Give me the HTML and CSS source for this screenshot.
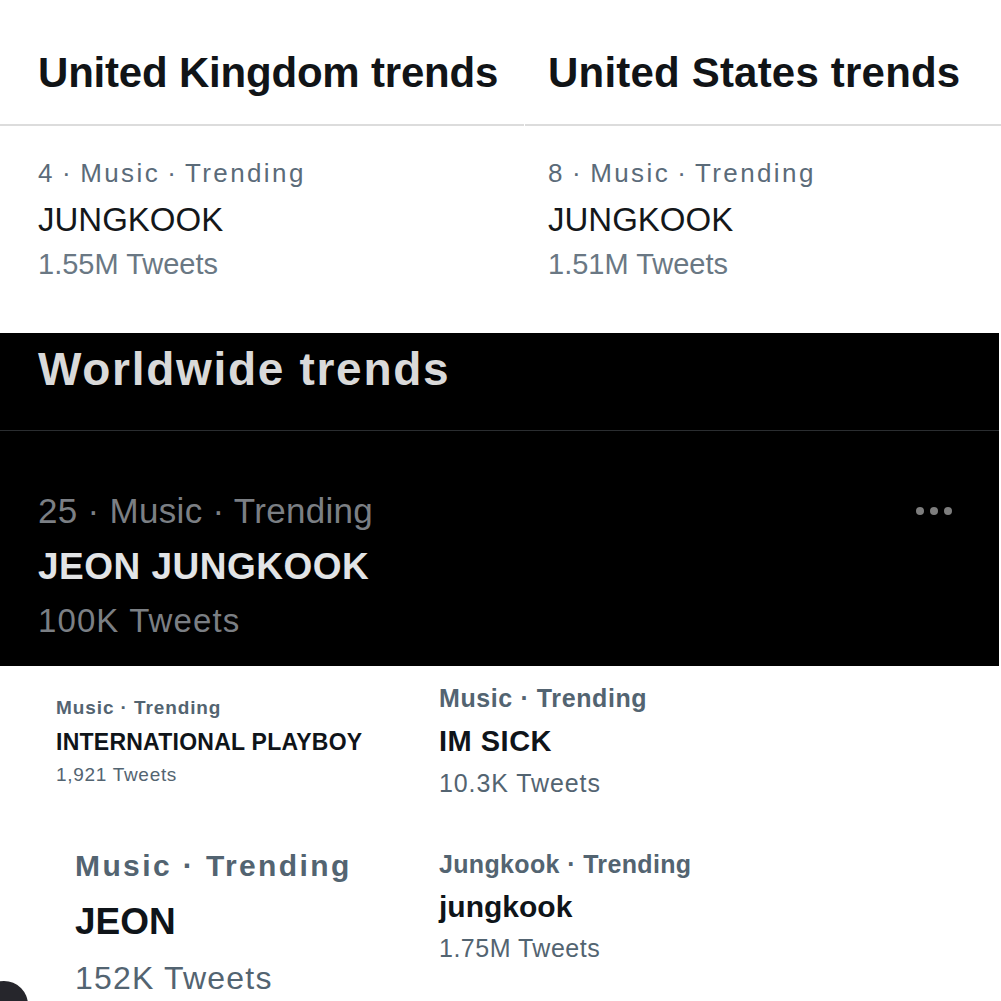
FILE: index.html
```html
<!DOCTYPE html>
<html lang="en">
<head>
  <meta charset="UTF-8">
  <title>Jungkook trends</title>
  <link rel="stylesheet" href="styles.css">
</head>
<body>
  <div class="top-row">
    <section class="panel panel-uk">
      <h2 class="panel-title">United Kingdom trends</h2>
      <div class="trend">
        <div class="trend-meta">4 · Music · Trending</div>
        <div class="trend-name">JUNGKOOK</div>
        <div class="trend-count">1.55M Tweets</div>
      </div>
    </section>
    <section class="panel panel-us">
      <h2 class="panel-title">United States trends</h2>
      <div class="trend">
        <div class="trend-meta">8 · Music · Trending</div>
        <div class="trend-name">JUNGKOOK</div>
        <div class="trend-count">1.51M Tweets</div>
      </div>
    </section>
  </div>

  <section class="dark-panel">
    <h2 class="dark-title">Worldwide trends</h2>
    <div class="dark-trend">
      <div class="dark-meta-row">
        <span class="dark-meta">25 · Music · Trending</span>
        <span class="more-dots"><i></i><i></i><i></i></span>
      </div>
      <div class="dark-name">JEON JUNGKOOK</div>
      <div class="dark-count">100K Tweets</div>
    </div>
  </section>

  <div class="bottom-row">
    <div class="bottom-col bottom-left">
      <div class="trend-small">
        <div class="meta">Music · Trending</div>
        <div class="name">INTERNATIONAL PLAYBOY</div>
        <div class="count">1,921 Tweets</div>
      </div>
      <div class="trend-big">
        <div class="meta">Music · Trending</div>
        <div class="name">JEON</div>
        <div class="count">152K Tweets</div>
      </div>
    </div>
    <div class="bottom-col bottom-right">
      <div class="trend-mid">
        <div class="meta">Music · Trending</div>
        <div class="name">IM SICK</div>
        <div class="count">10.3K Tweets</div>
      </div>
      <div class="trend-mid trend-next">
        <div class="meta">Jungkook · Trending</div>
        <div class="name name-lower">jungkook</div>
        <div class="count">1.75M Tweets</div>
      </div>
    </div>
    <span class="avatar"></span>
  </div>
</body>
</html>
```

FILE: styles.css
```css
body {
  margin: 0;
  width: 1001px;
  height: 1001px;
  overflow: hidden;
  background-color: #ffffff;
  font-family: "Liberation Sans", Arial, sans-serif;
}
h2 {
  margin: 0;
}

/* top: two light screenshots */
.top-row {
  display: grid;
  grid-template-columns: 524px 1fr;
  column-gap: 1px;
  height: 333px;
}
.panel-title {
  padding: 49px 0 27px 38px;
  font-size: 42px;
  line-height: 48px;
  font-weight: bold;
  color: #111417;
  border-bottom: 2px solid #dcdcdc;
  white-space: nowrap;
}
.panel-uk .panel-title {
  letter-spacing: -0.2px;
}
.panel-us .panel-title {
  padding-left: 23px;
  letter-spacing: 0.2px;
}
.trend {
  padding: 32px 0 0 38px;
}
.panel-us .trend {
  padding-left: 23px;
}
.trend-meta {
  font-size: 26px;
  line-height: 30px;
  letter-spacing: 2.4px;
  word-spacing: -2.5px;
  color: #5b6b79;
}
.trend-name {
  margin-top: 13px;
  font-size: 33px;
  line-height: 38px;
  color: #14171a;
}
.trend-count {
  margin-top: 8px;
  font-size: 29px;
  line-height: 34px;
  color: #6a7884;
}

/* middle: dark worldwide screenshot */
.dark-panel {
  width: 999px;
  height: 333px;
  background-color: #000000;
}
.dark-title {
  padding: 10px 0 34px 38px;
  font-size: 46px;
  line-height: 53px;
  font-weight: bold;
  letter-spacing: 1.7px;
  color: #d9d9d9;
  border-bottom: 1px solid #2a2d30;
}
.dark-trend {
  padding: 59px 47px 0 38px;
}
.dark-meta-row {
  display: flex;
  justify-content: space-between;
  align-items: center;
}
.dark-meta {
  font-size: 35px;
  line-height: 42px;
  letter-spacing: 0.3px;
  color: #7b7f84;
}
.more-dots {
  display: flex;
  gap: 6px;
}
.more-dots i {
  width: 8px;
  height: 8px;
  border-radius: 50%;
  background-color: #7d7d7d;
}
.dark-name {
  margin-top: 13px;
  font-size: 37px;
  line-height: 44px;
  font-weight: bold;
  letter-spacing: 0.5px;
  color: #e2e4e6;
}
.dark-count {
  margin-top: 12px;
  font-size: 33px;
  line-height: 39px;
  letter-spacing: 1.1px;
  color: #7b7f84;
}

/* bottom: two light web screenshots */
.bottom-row {
  position: relative;
  display: grid;
  grid-template-columns: 420px 1fr;
  height: 335px;
  overflow: hidden;
}
.meta {
  font-weight: bold;
  color: #536471;
}
.name {
  font-weight: bold;
  color: #0f1419;
}
.count {
  color: #536471;
}
.bottom-left {
  padding-top: 30px;
}
.trend-small {
  padding-left: 56px;
}
.trend-small .meta {
  font-size: 19px;
  line-height: 24px;
  letter-spacing: 0.9px;
}
.trend-small .name {
  margin-top: 8px;
  font-size: 23px;
  line-height: 28px;
  letter-spacing: 0.25px;
}
.trend-small .count {
  margin-top: 7px;
  font-size: 19px;
  line-height: 24px;
  letter-spacing: 0.7px;
}
.trend-big {
  margin-top: 61px;
  padding-left: 75px;
}
.trend-big .meta {
  font-size: 30px;
  line-height: 36px;
  letter-spacing: 2.4px;
}
.trend-big .name {
  margin-top: 16px;
  font-size: 37px;
  line-height: 44px;
}
.trend-big .count {
  margin-top: 15px;
  font-size: 32px;
  line-height: 38px;
  letter-spacing: 1.2px;
}
.bottom-right {
  padding: 17px 0 0 19px;
}
.trend-mid .meta {
  font-size: 25px;
  line-height: 30px;
  letter-spacing: 0.6px;
}
.trend-mid .name {
  margin-top: 11px;
  font-size: 29px;
  line-height: 34px;
  letter-spacing: 0.5px;
}
.trend-mid .count {
  margin-top: 10px;
  font-size: 25px;
  line-height: 30px;
  letter-spacing: 0.9px;
}
.trend-next {
  margin-top: 51px;
}
.trend-next .meta {
  letter-spacing: 0.35px;
}
.trend-mid .name-lower {
  margin-top: 10px;
  font-size: 30px;
  line-height: 36px;
  letter-spacing: 0;
}
.trend-next .count {
  margin-top: 8px;
  letter-spacing: 0.5px;
}
.avatar {
  position: absolute;
  left: -20px;
  top: 315px;
  width: 48px;
  height: 48px;
  border-radius: 50%;
  background-color: #26262c;
}
```
